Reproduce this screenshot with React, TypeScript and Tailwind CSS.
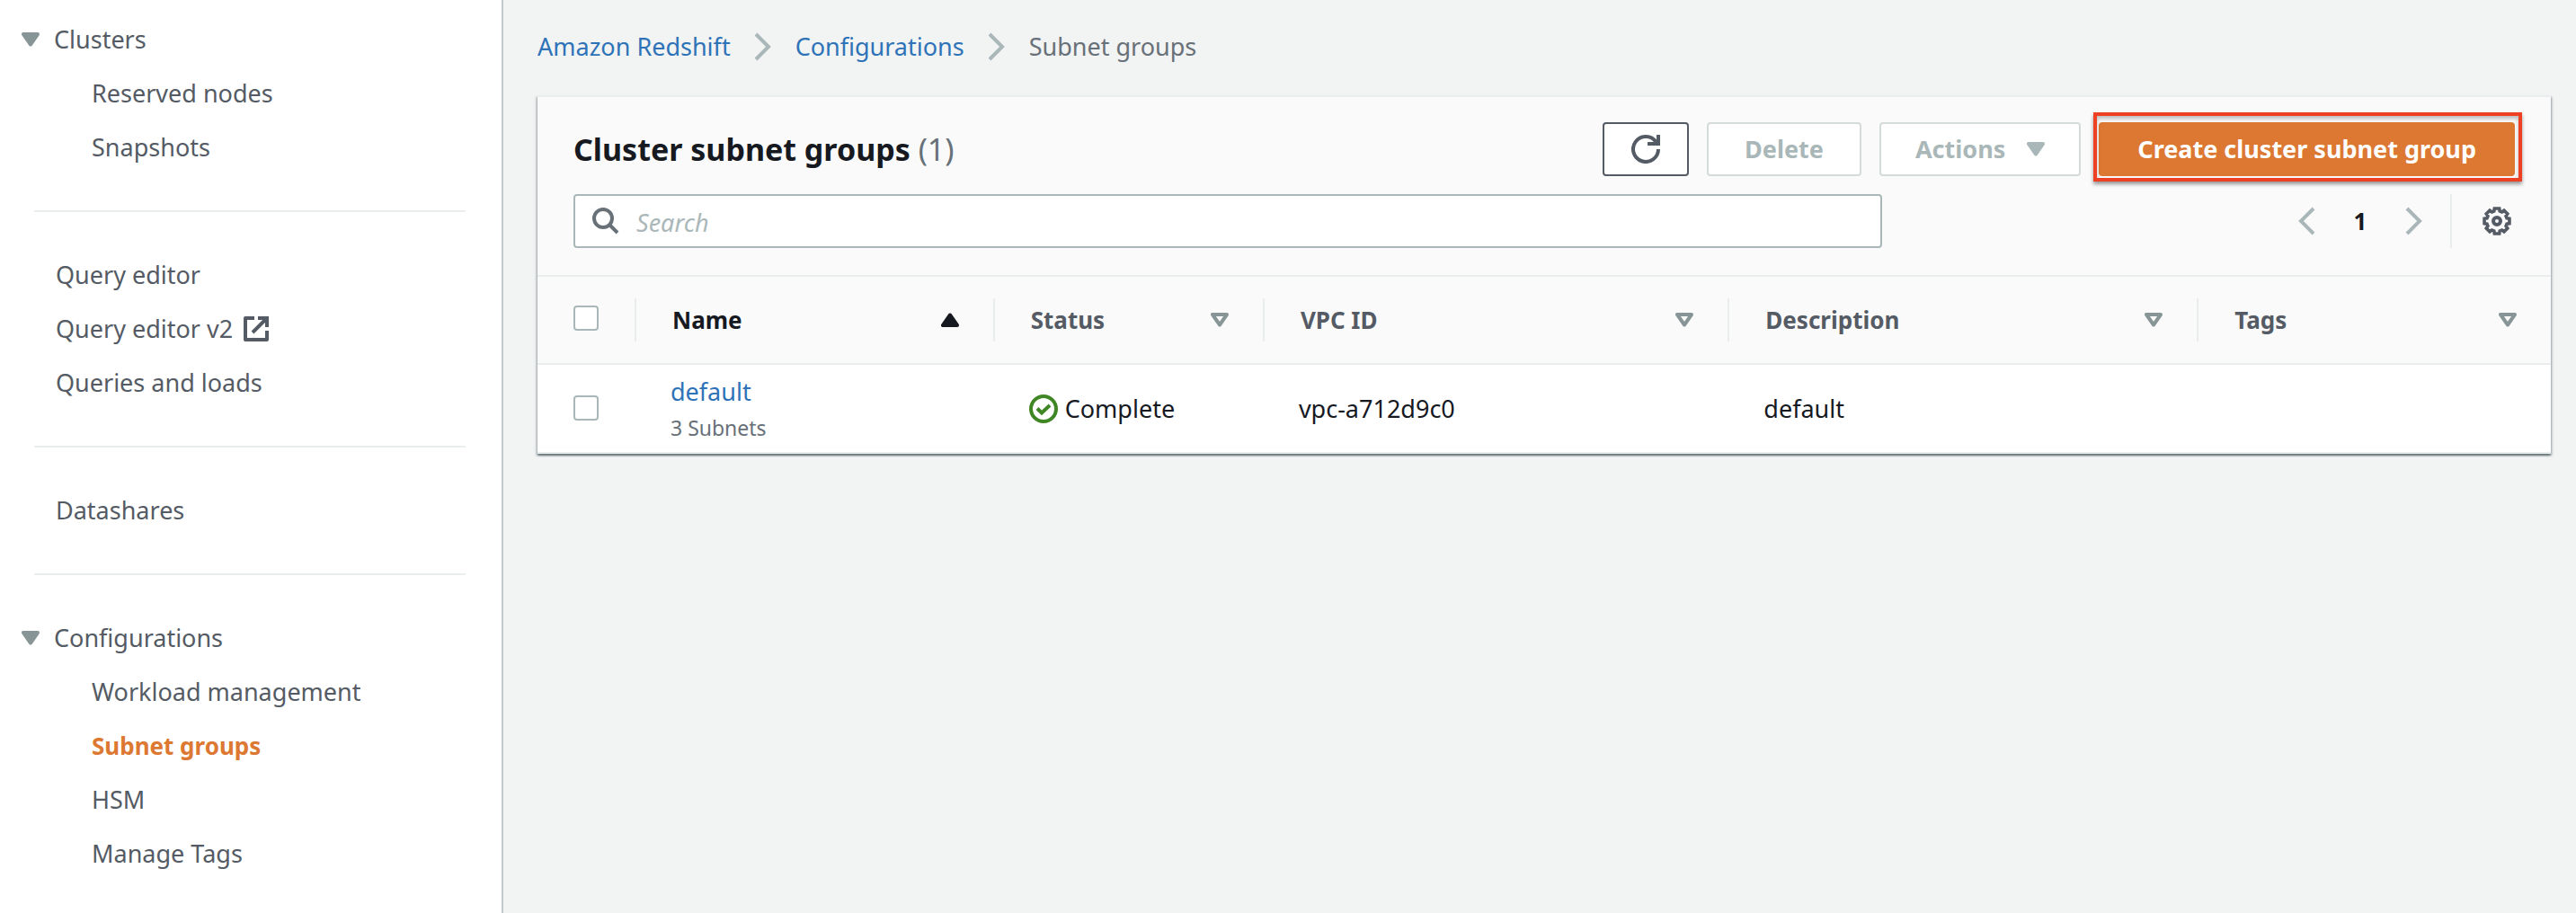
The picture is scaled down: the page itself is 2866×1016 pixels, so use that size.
import type { ReactNode } from "react";

function Caret({ className }: { className: string }) {
  return (
    <svg viewBox="0 0 20 16" className={`h-4 w-5 shrink-0 ${className}`} aria-hidden="true">
      <path d="M2 2h16l-8 11.5z" fill="currentColor" stroke="currentColor" strokeWidth="4" strokeLinejoin="round" />
    </svg>
  );
}

function SortIcon({ active }: { active?: boolean }) {
  return active ? (
    <svg viewBox="0 0 20 16" className="h-4 w-5 shrink-0 text-[#16191f]" aria-hidden="true">
      <path d="M2 14h16L10 2.5z" fill="currentColor" stroke="currentColor" strokeWidth="4" strokeLinejoin="round" />
    </svg>
  ) : (
    <svg viewBox="0 0 20 16" className="h-4 w-5 shrink-0 text-[#879596]" aria-hidden="true">
      <path d="M2 2h16l-8 11.5z" fill="none" stroke="currentColor" strokeWidth="4" strokeLinejoin="round" />
    </svg>
  );
}

function Chevron({ left }: { left?: boolean }) {
  return (
    <svg viewBox="0 0 20 32" className="h-8 w-5 shrink-0 text-[#aab7b8]" fill="none" stroke="currentColor" strokeWidth="4" aria-hidden="true">
      <path d={left ? "M18 2 4 16l14 14" : "M2 2l14 14L2 30"} />
    </svg>
  );
}

function ExternalIcon() {
  return (
    <svg viewBox="0 0 28 28" className="size-7 shrink-0" fill="none" stroke="currentColor" strokeWidth="4" aria-hidden="true">
      <path d="M12 2H2v24h24V16" strokeLinejoin="round" />
      <path d="M16 2h10v10M25 3 10 18" />
    </svg>
  );
}

function RefreshIcon() {
  return (
    <svg viewBox="0 0 32 32" className="size-8" fill="none" stroke="currentColor" strokeWidth="4" aria-hidden="true">
      <path d="M30 16A14 14 0 1 1 27.5 8" />
      <path d="M30 0v10H18" />
    </svg>
  );
}

function SearchIcon() {
  return (
    <svg viewBox="0 0 32 32" className="size-8 shrink-0 text-[#687078]" fill="none" stroke="currentColor" strokeWidth="4" aria-hidden="true">
      <circle cx="13" cy="13" r="10" />
      <path d="M20 20l9 9" />
    </svg>
  );
}

const gearPath =
  Array.from({ length: 8 }, (_, i) => i * 45)
    .flatMap((a) => [
      [a - 16, 11.5],
      [a - 11, 14.2],
      [a + 11, 14.2],
      [a + 16, 11.5],
    ])
    .map(([deg, r], i) => {
      const t = (deg * Math.PI) / 180;
      return `${i ? "L" : "M"}${(16 + r * Math.cos(t)).toFixed(2)} ${(16 + r * Math.sin(t)).toFixed(2)}`;
    })
    .join("") + "Z";

function GearIcon() {
  return (
    <svg viewBox="0 0 32 32" className="size-8" fill="none" stroke="currentColor" strokeWidth="4" aria-hidden="true">
      <path d={gearPath} strokeWidth="3.6" />
      <circle cx="16" cy="16" r="4" />
    </svg>
  );
}

function SuccessIcon() {
  return (
    <svg viewBox="0 0 32 32" className="size-8 shrink-0 text-[#3f8624]" fill="none" stroke="currentColor" strokeWidth="4" aria-hidden="true">
      <circle cx="16" cy="16" r="14" />
      <path d="M9 15.5l5 5 9-8.5" />
    </svg>
  );
}

function NavLink({ children, nested, active }: { children: ReactNode; nested?: boolean; active?: boolean }) {
  return (
    <li className={nested ? "pl-[102px]" : "pl-[62px]"}>
      <a
        href="#"
        aria-current={active ? "page" : undefined}
        className={`inline-flex items-center gap-3 whitespace-nowrap align-top ${active ? "text-[26px] leading-10 font-bold text-[#dd7832]" : ""}`}
      >
        {children}
      </a>
    </li>
  );
}

function NavGroup({ title, children }: { title: string; children: ReactNode }) {
  return (
    <li>
      <button type="button" aria-expanded="true" className="flex h-10 items-center gap-4 pl-6">
        <Caret className="text-[#879596]" />
        {title}
      </button>
      <ul className="mt-5 flex flex-col gap-5">{children}</ul>
    </li>
  );
}

function NavDivider() {
  return <hr className="my-[50px] mr-10 ml-[38px] border-t-2 border-[#eaeded]" />;
}

function Sidebar() {
  return (
    <nav
      aria-label="Service"
      className="w-[560px] shrink-0 border-r-2 border-[#c3c9ca] bg-white pt-6 pb-9 text-[27px] leading-10 text-[#545b64]"
    >
      <ul>
        <NavGroup title="Clusters">
          <NavLink nested>Reserved nodes</NavLink>
          <NavLink nested>Snapshots</NavLink>
        </NavGroup>
      </ul>
      <NavDivider />
      <ul className="flex flex-col gap-5">
        <NavLink>Query editor</NavLink>
        <NavLink>
          Query editor v2
          <ExternalIcon />
        </NavLink>
        <NavLink>Queries and loads</NavLink>
      </ul>
      <NavDivider />
      <ul>
        <NavLink>Datashares</NavLink>
      </ul>
      <NavDivider />
      <ul>
        <NavGroup title="Configurations">
          <NavLink nested>Workload management</NavLink>
          <NavLink nested active>
            Subnet groups
          </NavLink>
          <NavLink nested>HSM</NavLink>
          <NavLink nested>Manage Tags</NavLink>
        </NavGroup>
      </ul>
    </nav>
  );
}

function Breadcrumbs() {
  return (
    <nav aria-label="Breadcrumbs">
      <ol className="flex items-center gap-[26px] whitespace-nowrap text-[27px] leading-10">
        <li className="flex items-center gap-[26px]">
          <a href="#" className="text-[#2e73b8]">Amazon Redshift</a>
          <Chevron />
        </li>
        <li className="flex items-center gap-[26px]">
          <a href="#" className="text-[#2e73b8]">Configurations</a>
          <Chevron />
        </li>
        <li aria-current="page" className="text-[#687078]">Subnet groups</li>
      </ol>
    </nav>
  );
}

function Checkbox({ label }: { label: string }) {
  return (
    <input
      type="checkbox"
      aria-label={label}
      className="block size-7 appearance-none rounded-[4px] border-2 border-[#aab7b8] bg-white checked:bg-[#2e73b8]"
    />
  );
}

const columns = [
  { title: "Name", width: "w-[17.8%]", sorted: true },
  { title: "Status", width: "w-[13.4%]" },
  { title: "VPC ID", width: "w-[23.1%]" },
  { title: "Description", width: "w-[23.3%]" },
  { title: "Tags", width: "" },
];

function SubnetGroupTable() {
  return (
    <table className="w-full table-fixed text-left">
      <thead>
        <tr className="h-[97px] border-b-2 border-[#eaeded] bg-[#fafafa]">
          <th scope="col" className="w-[110px] p-0">
            <div className="flex h-12 items-center border-r-2 border-[#eaeded] pb-1 pl-10">
              <Checkbox label="Select all subnet groups" />
            </div>
          </th>
          {columns.map((c, i) => (
            <th key={c.title} scope="col" aria-sort={c.sorted ? "ascending" : undefined} className={`p-0 ${c.width}`}>
              <button
                type="button"
                className={`flex h-12 w-full items-center justify-between pr-[38px] pl-10 text-[26px] font-bold ${
                  c.sorted ? "text-[#16191f]" : "text-[#545b64]"
                } ${i < columns.length - 1 ? "border-r-2 border-[#eaeded]" : ""}`}
              >
                {c.title}
                <SortIcon active={c.sorted} />
              </button>
            </th>
          ))}
        </tr>
      </thead>
      <tbody>
        <tr className="h-[99px] border-b-2 border-[#eaeded] bg-white text-[27px] leading-10">
          <td className="p-0 pb-0.5 pl-10">
            <Checkbox label="Select default" />
          </td>
          <td className="p-0 pb-0.5 pl-[38px]">
            <a href="#" className="block text-[#2e73b8]">default</a>
            <div className="mt-1 text-[23px] leading-8 text-[#687078]">3 Subnets</div>
          </td>
          <td className="p-0 pl-[38px]">
            <div className="flex items-center gap-2">
              <SuccessIcon />
              Complete
            </div>
          </td>
          <td className="p-0 pl-[38px]">vpc-a712d9c0</td>
          <td className="p-0 pl-[38px]">default</td>
          <td className="p-0" />
        </tr>
      </tbody>
    </table>
  );
}

export default function App() {
  return (
    <div className="flex min-h-screen bg-[#f2f3f3] font-['Noto_Sans','Open_Sans',sans-serif] text-[#16191f]">
      <Sidebar />
      <main className="min-w-0 flex-1 pt-8 pr-7 pl-[38px]">
        <Breadcrumbs />
        <section className="mt-[34px] border-t-2 border-[#eaeded] bg-white shadow-[0_2px_2px_0_rgba(0,28,36,0.45),2px_2px_2px_0_rgba(0,28,36,0.15),-2px_2px_2px_0_rgba(0,28,36,0.15)]">
          <header className="border-b-2 border-[#eaeded] bg-[#fafafa] px-10 pt-7 pb-[30px]">
            <div className="flex items-center justify-between">
              <h1 className="text-[34px] leading-10 font-bold whitespace-nowrap">
                Cluster subnet groups <span className="font-normal text-[#687078]">(1)</span>
              </h1>
              <div className="flex gap-5 text-[27px] font-bold whitespace-nowrap">
                <button
                  type="button"
                  aria-label="Refresh"
                  className="flex h-[60px] w-24 items-center justify-center rounded-[4px] border-2 border-[#545b64] bg-white text-[#545b64]"
                >
                  <RefreshIcon />
                </button>
                <button type="button" disabled className="h-[60px] rounded-[4px] border-2 border-[#d5dbdb] bg-white px-10 text-[#aab7b8]">
                  Delete
                </button>
                <button
                  type="button"
                  disabled
                  className="flex h-[60px] items-center gap-6 rounded-[4px] border-2 border-[#d5dbdb] bg-white px-[38px] text-[#aab7b8]"
                >
                  Actions
                  <Caret className="text-[#aab7b8]" />
                </button>
                <div className="relative">
                  <button type="button" className="h-[60px] rounded-[4px] bg-[#dd7832] px-[43px] text-white">
                    Create cluster subnet group
                  </button>
                  <div className="pointer-events-none absolute -top-[11px] -right-2 -bottom-[6px] -left-[6px] border-4 border-[#ee4023] shadow-[0_3px_4px_rgba(0,0,0,0.4),inset_0_3px_4px_rgba(0,0,0,0.25)]" />
                </div>
              </div>
            </div>
            <div className="mt-5 flex items-center justify-between">
              <label className="flex h-[60px] w-[67.4%] items-center gap-[18px] rounded-[4px] border-2 border-[#aab7b8] bg-white px-[18px]">
                <SearchIcon />
                <input
                  type="search"
                  aria-label="Search"
                  placeholder="Search"
                  className="min-w-0 flex-1 bg-transparent pt-1 text-[27px] outline-none placeholder:text-[#aab7b8] placeholder:italic"
                />
              </label>
              <div className="flex items-center text-[#545b64]">
                <button type="button" disabled aria-label="Previous page">
                  <Chevron left />
                </button>
                <button type="button" aria-current="page" className="w-[100px] text-[26px] leading-10 font-bold text-[#16191f]">
                  1
                </button>
                <button type="button" disabled aria-label="Next page">
                  <Chevron />
                </button>
                <div className="ml-[30px] flex h-[60px] items-center border-l-2 border-[#eaeded] pr-1 pl-[34px]">
                  <button type="button" aria-label="Preferences">
                    <GearIcon />
                  </button>
                </div>
              </div>
            </div>
          </header>
          <SubnetGroupTable />
        </section>
      </main>
    </div>
  );
}
